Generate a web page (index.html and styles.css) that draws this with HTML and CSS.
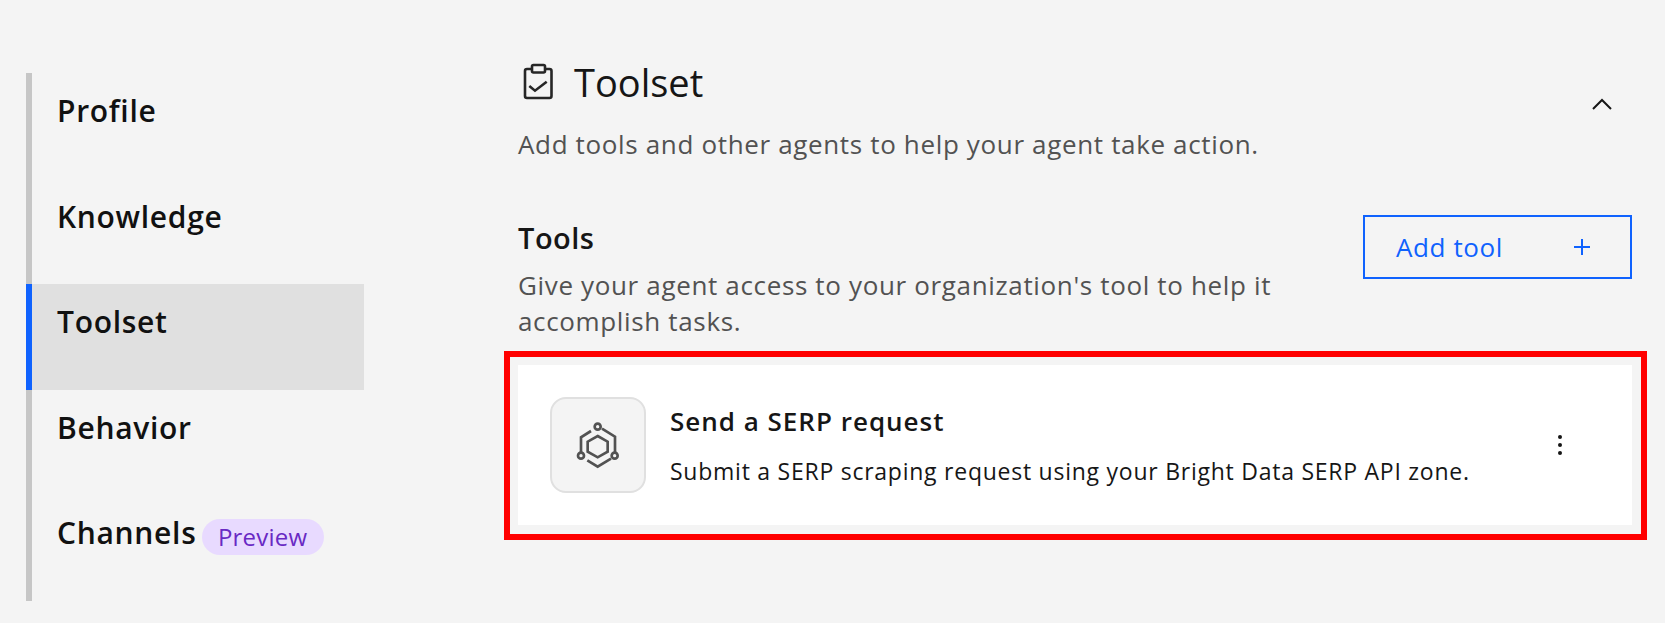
FILE: index.html
```html
<!DOCTYPE html>
<html lang="en">
<head>
    <meta charset="UTF-8">
    <title>Toolset</title>
    <link rel="stylesheet" href="styles.css">
</head>
<body>

<div class="page">
    <nav class="nav">
        <a class="nav-item">Profile</a>
        <a class="nav-item">Knowledge</a>
        <a class="nav-item active">Toolset</a>
        <a class="nav-item">Behavior</a>
        <a class="nav-item">Channels <span class="tag">Preview</span></a>
    </nav>

    <main class="main">
        <div class="section-head">
            <div class="section-title">
                <svg class="title-icon" width="32" height="40" viewBox="0 0 32 40" fill="none" stroke="#262626" stroke-width="2.6">
                    <path d="M10 7H5a2 2 0 0 0-2 2v25a2 2 0 0 0 2 2h22.500a2 2 0 0 0 2-2V9a2 2 0 0 0-2-2H23"/>
                    <rect x="10" y="3" width="13" height="7.500" rx="1.500"/>
                    <path d="M7.300 24L13 28.700L24.700 19.700"/>
                </svg>
                <h1>Toolset</h1>
            </div>
            <svg class="chevron" width="22" height="14" viewBox="0 0 22 14" fill="none" stroke="#161616" stroke-width="2">
                <path d="M2 12L11 3L20 12"/>
            </svg>
        </div>
        <p class="section-sub">Add tools and other agents to help your agent take action.</p>

        <div class="tools-head">
            <div class="tools-text">
                <h2>Tools</h2>
                <p>Give your agent access to your organization's tool to help it accomplish tasks.</p>
            </div>
            <button class="add-btn">
                <span>Add tool</span>
                <svg width="16" height="16" viewBox="0 0 16 16" fill="none" stroke="#0f62fe" stroke-width="2"><path d="M8 0V16M0 8H16"/></svg>
            </button>
        </div>

        <div class="highlight">
            <div class="tool-card">
                <div class="tool-icon">
                    <svg width="48" height="48" viewBox="222 213 144 144" fill="none" stroke="#525252" stroke-width="8">
                        <path d="M293 258L323 275V305L293 322L263 305V275Z"/>
                        <circle cx="293" cy="230" r="9"/>
                        <circle cx="243" cy="317" r="9"/>
                        <circle cx="344" cy="317" r="9"/>
                        <path d="M273 243L243 262V307"/>
                        <path d="M306 236L345 260V307"/>
                        <path d="M262 331L293 350L333 326"/>
                    </svg>
                </div>
                <div class="tool-body">
                    <h3>Send a SERP request</h3>
                    <p>Submit a SERP scraping request using your Bright Data SERP API zone.</p>
                </div>
                <div class="kebab"><i></i><i></i><i></i></div>
            </div>
        </div>
    </main>
</div>

</body>
</html>
```

FILE: styles.css
```css
body {
    margin: 0;
    background: #f4f4f4;
    color: #161616;
    font-family: "Open Sans", "Noto Sans", sans-serif;
    overflow: hidden;
}

h1, h2, h3, p {
    margin: 0;
}

.page {
    display: flex;
    height: 623px;
    box-sizing: border-box;
    padding-left: 26px;
}

/* left nav */
.nav {
    width: 338px;
    margin-top: 73px;
    height: 528px;
    flex-shrink: 0;
    display: flex;
    flex-direction: column;
}

.nav-item {
    height: 105.6px;
    box-sizing: border-box;
    padding: 20px 0 0 25px;
    border-left: 6px solid #c6c6c6;
    font-size: 30px;
    line-height: 36px;
    font-weight: 600;
    letter-spacing: 0.7px;
    color: #111;
}

.nav-item.active {
    background: #e0e0e0;
    border-left-color: #0f62fe;
}

.tag {
    display: inline-block;
    margin-left: -3px;
    padding: 0 17px 0 16px;
    height: 36px;
    border-radius: 18px;
    background: #e8daff;
    color: #6929c4;
    font-size: 24px;
    font-weight: 400;
    letter-spacing: 0.2px;
    line-height: 36px;
    vertical-align: -2px;
}

/* right column */
.main {
    margin-left: 154px;
    width: 1114px;
}

.section-head {
    display: flex;
    justify-content: space-between;
    align-items: flex-start;
    margin-top: 62px;
    height: 65px;
}

.section-title {
    display: flex;
    align-items: flex-start;
    padding-left: 4px;
}

.section-title h1 {
    margin-left: 20px;
    font-size: 38px;
    line-height: 40px;
    font-weight: 400;
    color: #161616;
}

.chevron {
    margin: 35px 19px 0 0;
}

.section-sub {
    font-size: 26px;
    line-height: 34px;
    letter-spacing: 0.65px;
    color: #525252;
}

.tools-head {
    display: flex;
    justify-content: space-between;
    margin-top: 54px;
}

.tools-text {
    width: 760px;
}

.tools-text h2 {
    padding-top: 5px;
    font-size: 29px;
    line-height: 36px;
    font-weight: 600;
    letter-spacing: 0.5px;
    margin-bottom: 11px;
}

.tools-text p {
    font-size: 26px;
    line-height: 36px;
    letter-spacing: 0.65px;
    color: #525252;
}

.add-btn {
    display: flex;
    justify-content: space-between;
    align-items: center;
    width: 269px;
    height: 64px;
    box-sizing: border-box;
    padding: 0 40px 0 31px;
    margin-top: 0;
    border: 2px solid #0f62fe;
    background: transparent;
    color: #0f62fe;
    font-family: inherit;
    font-size: 26px;
    letter-spacing: 0.6px;
}

/* red annotation round the card */
.highlight {
    margin: 12px -15px 0 -14px;
    padding: 8px 9px 9px 8px;
    border: 6px solid #ff0000;
}

.tool-card {
    display: flex;
    align-items: center;
    height: 160px;
    box-sizing: border-box;
    padding: 0 32px;
    background: #fff;
}

.tool-icon {
    width: 96px;
    height: 96px;
    box-sizing: border-box;
    flex-shrink: 0;
    display: flex;
    align-items: center;
    justify-content: center;
    border: 2px solid #e0e0e0;
    border-radius: 16px;
    background: #f4f4f4;
}

.tool-body {
    flex: 1;
    margin-left: 24px;
}

.tool-body h3 {
    font-size: 26px;
    line-height: 32px;
    font-weight: 600;
    letter-spacing: 1px;
    margin-bottom: 20px;
}

.tool-body p {
    font-size: 23px;
    line-height: 28px;
    letter-spacing: 0.75px;
}

.kebab {
    display: flex;
    flex-direction: column;
    gap: 4px;
    margin-right: 38px;
}

.kebab i {
    width: 4px;
    height: 4px;
    border-radius: 50%;
    background: #161616;
}
```
